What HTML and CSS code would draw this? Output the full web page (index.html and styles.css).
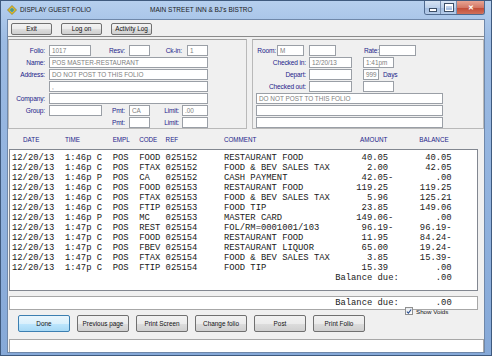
FILE: index.html
```html
<!DOCTYPE html>
<html lang="en">
  <head>
    <meta charset="UTF-8" />
    <title>Display Guest Folio</title>
    <link rel="stylesheet" href="styles.css">
  </head>
  <body>
    <div class="window">
      <div class="titlebar">
        <svg class="app-icon" width="10" height="10" viewBox="0 0 10 10">
          <path d="M5 0.5 L9.5 5 L5 9.5 L0.5 5 Z" fill="#e8c020" stroke="#7a6a10" stroke-width="0.6" />
          <path d="M5 2.5 L7.5 5 L5 7.5 L2.5 5 Z" fill="#3a8ad0" />
          <circle cx="5" cy="5" r="1" fill="#5cb040" />
        </svg>
        <span class="title">DISPLAY GUEST FOLIO</span>
        <span class="subtitle">MAIN STREET INN &amp; BJ's BISTRO</span>
        <div class="caption-btns">
          <div class="cap-btn cap-min"><span class="glyph-min"></span></div>
          <div class="cap-btn cap-max"><span class="glyph-max"></span></div>
          <div class="cap-btn cap-close">&#x2715;</div>
        </div>
      </div>

      <div class="client">
        <div class="toolbar">
          <button class="btn tb-btn">Exit</button>
          <button class="btn tb-btn">Log on</button>
          <button class="btn tb-btn">Activity Log</button>
        </div>

        <div class="info">
          <div class="group group-guest">
            <div class="row">
              <span class="lbl l-main">Folio:</span>
              <div class="field w42">1017</div>
              <span class="lbl l-resv">Resv:</span>
              <div class="field w21"></div>
              <span class="lbl l-ckin">Ck-in:</span>
              <div class="field w21">1</div>
            </div>
            <div class="row">
              <span class="lbl l-main">Name:</span>
              <div class="field w159">POS MASTER-RESTAURANT</div>
            </div>
            <div class="row">
              <span class="lbl l-main">Address:</span>
              <div class="field w159">DO NOT POST TO THIS FOLIO</div>
            </div>
            <div class="row">
              <span class="lbl l-main"></span>
              <div class="field w159">,</div>
            </div>
            <div class="row">
              <span class="lbl l-main">Company:</span>
              <div class="field w159"></div>
            </div>
            <div class="row">
              <span class="lbl l-main">Group:</span>
              <div class="field w53"></div>
              <span class="lbl l-pmt">Pmt:</span>
              <div class="field w21">CA</div>
              <span class="lbl l-limit">Limit:</span>
              <div class="field w26">.00</div>
            </div>
            <div class="row">
              <span class="lbl l-main"></span>
              <div class="spacer w53"></div>
              <span class="lbl l-pmt">Pmt:</span>
              <div class="field w21"></div>
              <span class="lbl l-limit">Limit:</span>
              <div class="field w26"></div>
            </div>
          </div>

          <div class="group group-stay">
            <div class="row">
              <span class="lbl l-room">Room:</span>
              <div class="field w27">M</div>
              <div class="field w27 gap5"></div>
              <span class="lbl l-rate">Rate:</span>
              <div class="field w37"></div>
            </div>
            <div class="row">
              <span class="lbl l-stay">Checked in:</span>
              <div class="field w43">12/20/13</div>
              <div class="field w31 gap11">1:41pm</div>
            </div>
            <div class="row">
              <span class="lbl l-stay">Depart:</span>
              <div class="field w43"></div>
              <div class="field w16 gap11">999</div>
              <span class="lbl days">Days</span>
            </div>
            <div class="row">
              <span class="lbl l-stay">Checked out:</span>
              <div class="field w43"></div>
              <div class="field w31 gap11"></div>
            </div>
            <div class="row">
              <div class="field w187 note">DO NOT POST TO THIS FOLIO</div>
            </div>
            <div class="row">
              <div class="field w187 note"></div>
            </div>
            <div class="row">
              <div class="field w187 note"></div>
            </div>
          </div>
        </div>

        <div class="list-head">
          <span class="h-date">DATE</span>
          <span>TIME</span>
          <span></span>
          <span>EMPL</span>
          <span>CODE</span>
          <span>REF</span>
          <span>COMMENT</span>
          <span class="h-num">AMOUNT</span>
          <span class="h-num h-bal">BALANCE</span>
        </div>

        <div class="list">
          <div class="line"><span>12/20/13</span><span>1:46p</span><span>C</span><span>POS</span><span>FOOD</span><span>025152</span><span>RESTAURANT FOOD</span><span class="amt">40.05 </span><span class="bal">40.05</span></div>
          <div class="line"><span>12/20/13</span><span>1:46p</span><span>C</span><span>POS</span><span>FTAX</span><span>025152</span><span>FOOD &amp; BEV SALES TAX</span><span class="amt">2.00 </span><span class="bal">42.05</span></div>
          <div class="line"><span>12/20/13</span><span>1:46p</span><span>P</span><span>POS</span><span>CA</span><span>025152</span><span>CASH PAYMENT</span><span class="amt">42.05-</span><span class="bal">.00</span></div>
          <div class="line"><span>12/20/13</span><span>1:46p</span><span>C</span><span>POS</span><span>FOOD</span><span>025153</span><span>RESTAURANT FOOD</span><span class="amt">119.25 </span><span class="bal">119.25</span></div>
          <div class="line"><span>12/20/13</span><span>1:46p</span><span>C</span><span>POS</span><span>FTAX</span><span>025153</span><span>FOOD &amp; BEV SALES TAX</span><span class="amt">5.96 </span><span class="bal">125.21</span></div>
          <div class="line"><span>12/20/13</span><span>1:46p</span><span>C</span><span>POS</span><span>FTIP</span><span>025153</span><span>FOOD TIP</span><span class="amt">23.85 </span><span class="bal">149.06</span></div>
          <div class="line"><span>12/20/13</span><span>1:46p</span><span>P</span><span>POS</span><span>MC</span><span>025153</span><span>MASTER CARD</span><span class="amt">149.06-</span><span class="bal">.00</span></div>
          <div class="line"><span>12/20/13</span><span>1:47p</span><span>C</span><span>POS</span><span>REST</span><span>025154</span><span>FOL/RM=0001001/103</span><span class="amt">96.19-</span><span class="bal">96.19-</span></div>
          <div class="line"><span>12/20/13</span><span>1:47p</span><span>C</span><span>POS</span><span>FOOD</span><span>025154</span><span>RESTAURANT FOOD</span><span class="amt">11.95 </span><span class="bal">84.24-</span></div>
          <div class="line"><span>12/20/13</span><span>1:47p</span><span>C</span><span>POS</span><span>FBEV</span><span>025154</span><span>RESTAURANT LIQUOR</span><span class="amt">65.00 </span><span class="bal">19.24-</span></div>
          <div class="line"><span>12/20/13</span><span>1:47p</span><span>C</span><span>POS</span><span>FTAX</span><span>025154</span><span>FOOD &amp; BEV SALES TAX</span><span class="amt">3.85 </span><span class="bal">15.39-</span></div>
          <div class="line"><span>12/20/13</span><span>1:47p</span><span>C</span><span>POS</span><span>FTIP</span><span>025154</span><span>FOOD TIP</span><span class="amt">15.39 </span><span class="bal">.00</span></div>
          <div class="due"><span>Balance due:</span><span class="bal">.00</span></div>
        </div>

        <div class="total-box">
          <div class="due"><span>Balance due:</span><span class="bal">.00</span></div>
        </div>

        <div class="actions">
          <button class="btn act-btn default">Done</button>
          <button class="btn act-btn">Previous page</button>
          <button class="btn act-btn">Print Screen</button>
          <button class="btn act-btn">Change folio</button>
          <button class="btn act-btn">Post</button>
          <button class="btn act-btn">Print Folio</button>
          <label class="check">
            <span class="box">
              <svg width="7" height="7" viewBox="0 0 7 7"><path d="M1 3.6 L2.8 5.4 L6 1.2" fill="none" stroke="#2a4f8f" stroke-width="1.3" /></svg>
            </span>
            Show Voids
          </label>
        </div>

        <div class="status"></div>
      </div>
    </div>
  </body>
</html>
```

FILE: styles.css
```css
body {
  margin: 0;
  font-family: "Liberation Sans", Arial, sans-serif;
  background: #ffffff;
}

.window {
  width: 492px;
  height: 356px;
  box-sizing: border-box;
  border: 1px solid #3f5a7e;
  background: linear-gradient(#b6cfee, #9cbbe3 40px, #86a9d8);
  display: flex;
  flex-direction: column;
}

/* title bar */

.titlebar {
  height: 17px;
  display: flex;
  align-items: center;
  padding-left: 6px;
  font-size: 6.4px;
  color: #1b1b1b;
}

.app-icon {
  margin-right: 3px;
}

.title {
  width: 130px;
}

.subtitle {
  font-size: 6.5px;
}

.caption-btns {
  margin-left: auto;
  margin-right: 6px;
  align-self: flex-start;
  display: flex;
  border: 1px solid #4f6a8f;
  border-top: none;
  border-radius: 0 0 3px 3px;
  overflow: hidden;
}

.cap-btn {
  height: 13px;
  display: flex;
  align-items: center;
  justify-content: center;
  box-sizing: border-box;
}

.cap-min,
.cap-max {
  width: 16px;
  background: linear-gradient(#d6e3f3, #bcd0ea 50%, #a3bde0 51%, #b4cbe9);
  border-right: 1px solid #7890b0;
}

.cap-close {
  width: 27px;
  background: linear-gradient(#e8a493, #d37866 50%, #c14a35 51%, #d0705a);
  color: #ffffff;
  font-size: 7px;
  font-weight: bold;
}

.glyph-min {
  width: 6px;
  height: 2px;
  margin-top: 4px;
  background: #ffffff;
  border: 1px solid #3c4e66;
}

.glyph-max {
  width: 6px;
  height: 4px;
  border: 1px solid #ffffff;
  border-top-width: 2px;
  outline: 1px solid #3c4e66;
}

/* client area */

.client {
  flex: 1;
  margin: 1px 6px 2px 6px;
  background: #f0f0f0;
  border: 1px solid #6f88aa;
  display: flex;
  flex-direction: column;
  min-height: 0;
}

.btn {
  font-family: "Liberation Sans", Arial, sans-serif;
  font-size: 6.4px;
  color: #111111;
  border: 1px solid #707070;
  border-radius: 2px;
  background: linear-gradient(#f2f2f2, #ebebeb 50%, #dddddd 51%, #cfcfcf);
  padding: 0;
  box-sizing: border-box;
}

.toolbar {
  height: 17px;
  display: flex;
  align-items: center;
  gap: 9px;
  padding: 1px 0 0 3px;
  border-bottom: 1px solid #8a8a8a;
  box-sizing: border-box;
}

.tb-btn {
  width: 41px;
  height: 12px;
}

/* guest / stay boxes */

.info {
  display: flex;
  gap: 5px;
  padding: 2px 0 0 0;
}

.group {
  height: 90px;
  box-sizing: border-box;
  border: 1px solid #b9b9b9;
  border-top-color: #a0a0a0;
  padding-top: 5px;
  display: flex;
  flex-direction: column;
  gap: 1px;
}

.group-guest {
  width: 239px;
}

.group-stay {
  flex: 1;
}

.row {
  display: flex;
  align-items: center;
  height: 11px;
}

.lbl {
  color: #23238a;
  font-size: 6.6px;
  letter-spacing: -0.15px;
  text-align: right;
  white-space: nowrap;
  box-sizing: border-box;
}

.field {
  height: 11px;
  box-sizing: border-box;
  border: 1px solid #9a9fa6;
  background: #ffffff;
  color: #808080;
  font-size: 6.4px;
  line-height: 9px;
  padding-left: 2px;
  white-space: nowrap;
  overflow: hidden;
}

.l-main { width: 40px; padding-right: 4px; }
.l-resv { width: 38px; padding-right: 4px; }
.l-ckin { width: 37px; padding-right: 5px; }
.l-pmt { width: 27px; padding-right: 4px; }
.l-limit { width: 32px; padding-right: 3px; }
.l-room { width: 24px; padding-right: 1px; }
.l-rate { width: 43px; padding-right: 0; }
.l-stay { width: 56px; padding-right: 3px; }
.days { padding-left: 4px; }

.w16 { width: 16px; }
.w21 { width: 21px; }
.w26 { width: 26px; }
.w27 { width: 27px; }
.w31 { width: 31px; }
.w37 { width: 37px; }
.w42 { width: 42px; }
.w43 { width: 43px; }
.w53 { width: 53px; }
.w159 { width: 159px; }
.w187 { width: 187px; }
.gap5 { margin-left: 5px; }
.gap11 { margin-left: 11px; }
.spacer { height: 11px; }
.note { margin-left: 3px; }

/* transaction list */

.list-head,
.line {
  display: grid;
  grid-template-columns: 10ch 6ch 3ch 5ch 5ch 11ch 20ch 12ch 11ch;
  font-family: "Liberation Mono", "Courier New", monospace;
  font-size: 8.83px;
}

.list-head {
  height: 19px;
  align-items: center;
  padding: 0 0 0 4px;
  margin-top: 1px;
}

.list-head span {
  font-family: "Liberation Sans", Arial, sans-serif;
  font-size: 6.3px;
  color: #23238a;
}

.list-head .h-date {
  padding-left: 11px;
}

.list-head .h-num {
  text-align: right;
  padding-right: 6px;
}

.list-head .h-bal {
  padding-right: 3px;
}

.list {
  height: 142px;
  margin: 0 6px 0 1px;
  box-sizing: border-box;
  border: 1px solid #828790;
  background: #ffffff;
  padding: 3px 0 0 2px;
}

.line,
.due {
  height: 10px;
  line-height: 10px;
  color: #1a1a1a;
  white-space: pre;
}

.amt,
.bal {
  text-align: right;
}

.due {
  display: flex;
  font-family: "Liberation Mono", "Courier New", monospace;
  font-size: 8.83px;
  padding-left: 61ch;
}

.due .bal {
  width: 10ch;
}

.total-box {
  height: 14px;
  margin: 5px 6px 0 1px;
  box-sizing: border-box;
  border: 1px solid #a7a7a7;
  background: #ffffff;
  padding: 1px 0 0 2px;
}

/* bottom buttons */

.actions {
  height: 27px;
  display: flex;
  align-items: center;
  gap: 7px;
  padding-left: 10px;
}

.act-btn {
  width: 52px;
  height: 17px;
}

.act-btn.default {
  border-color: #3c7fb1;
  background: linear-gradient(#eaf6fd, #d9f0fc 50%, #bee6fd 51%, #a7d9f5);
}

.check {
  align-self: flex-start;
  display: flex;
  align-items: center;
  gap: 3px;
  margin: -3px 0 0 33px;
  font-size: 6.2px;
  color: #111111;
}

.check .box {
  width: 8px;
  height: 8px;
  box-sizing: border-box;
  border: 1px solid #8f8f8f;
  background: linear-gradient(#e6eaee, #ffffff);
  display: flex;
  align-items: center;
  justify-content: center;
}

.status {
  flex: 1;
  margin: 2px 0 0 1px;
  border: 1px solid #a7a7a7;
  border-bottom: none;
  background: #ffffff;
}
```
